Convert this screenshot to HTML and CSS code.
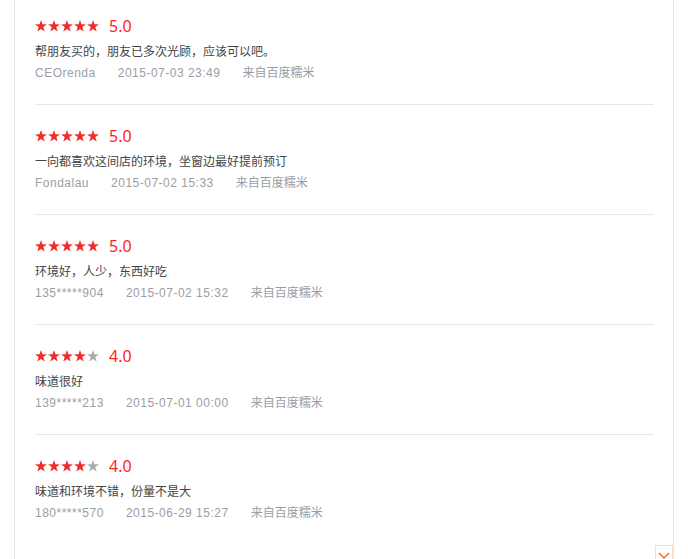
FILE: index.html
```html
<!DOCTYPE html>
<html lang="zh-CN">
<head>
    <meta charset="UTF-8">
    <title>评论</title>
    <link rel="stylesheet" href="styles.css">
</head>
<body>
    <div class="panel">
        <ul class="comments">
            <li class="comment">
                <div class="rating">
                    <span class="stars"><i class="on"></i><i class="on"></i><i class="on"></i><i class="on"></i><i class="on"></i></span>
                    <span class="score">5.0</span>
                </div>
                <p class="text">帮朋友买的，朋友已多次光顾，应该可以吧。</p>
                <p class="meta"><span>CEOrenda</span><span>2015-07-03 23:49</span><span class="src">来自百度糯米</span></p>
            </li>
            <li class="comment">
                <div class="rating">
                    <span class="stars"><i class="on"></i><i class="on"></i><i class="on"></i><i class="on"></i><i class="on"></i></span>
                    <span class="score">5.0</span>
                </div>
                <p class="text">一向都喜欢这间店的环境，坐窗边最好提前预订</p>
                <p class="meta"><span>Fondalau</span><span>2015-07-02 15:33</span><span class="src">来自百度糯米</span></p>
            </li>
            <li class="comment">
                <div class="rating">
                    <span class="stars"><i class="on"></i><i class="on"></i><i class="on"></i><i class="on"></i><i class="on"></i></span>
                    <span class="score">5.0</span>
                </div>
                <p class="text">环境好，人少，东西好吃</p>
                <p class="meta"><span>135*****904</span><span>2015-07-02 15:32</span><span class="src">来自百度糯米</span></p>
            </li>
            <li class="comment">
                <div class="rating">
                    <span class="stars"><i class="on"></i><i class="on"></i><i class="on"></i><i class="on"></i><i></i></span>
                    <span class="score">4.0</span>
                </div>
                <p class="text">味道很好</p>
                <p class="meta"><span>139*****213</span><span>2015-07-01 00:00</span><span class="src">来自百度糯米</span></p>
            </li>
            <li class="comment">
                <div class="rating">
                    <span class="stars"><i class="on"></i><i class="on"></i><i class="on"></i><i class="on"></i><i></i></span>
                    <span class="score">4.0</span>
                </div>
                <p class="text">味道和环境不错，份量不是大</p>
                <p class="meta"><span>180*****570</span><span>2015-06-29 15:27</span><span class="src">来自百度糯米</span></p>
            </li>
        </ul>
        <a class="more" href="#">
            <svg width="12" height="8" viewBox="0 0 12 8"><path d="M1 1 L6 6 L11 1" fill="none" stroke="#ff6600" stroke-width="1.4"/></svg>
        </a>
    </div>
</body>
</html>
```

FILE: styles.css
```css
:root {
    --red: #f22;
    --star: #ee2c2c;
    --grey: #9a9ea6;
    --line: #e6e6e6;
}
body {
    margin: 0;
    background: #fff;
    font-family: "Microsoft YaHei", "Noto Sans", "Noto Sans CJK SC", sans-serif;
    font-size: 12px;
    color: #444;
    overflow: hidden;
}
.panel {
    position: relative;
    width: 658px;
    height: 559px;
    margin-left: 14px;
    border-left: 1px solid var(--line);
    border-right: 1px solid var(--line);
    overflow: hidden;
}
.comments {
    list-style: none;
    margin: -5px 0 0;
    padding: 0 19px 0 20px;
}
.comment {
    padding: 21px 0 21px;
    border-bottom: 1px solid var(--line);
}
.comment:last-child {
    border-bottom: none;
}
.rating {
    display: flex;
    align-items: center;
    height: 20px;
}
.stars {
    display: flex;
    gap: 1px;
}
/* star drawn with clip-path */
.stars i {
    display: block;
    width: 12px;
    height: 12px;
    background: #aaa;
    clip-path: polygon(50% 0%, 62% 36%, 100% 37%, 69% 59%, 81% 96%, 50% 74%, 19% 96%, 31% 59%, 0% 37%, 38% 36%);
}
.stars i.on {
    background: var(--star);
}
.score {
    margin-left: 10px;
    font-size: 16px;
    color: var(--red);
    line-height: 20px;
}
.text {
    margin: 6px 0 0;
    line-height: 20px;
}
.meta {
    margin: 1px 0 0;
    line-height: 20px;
    color: var(--grey);
    font-family: "Liberation Sans", "Noto Sans CJK SC", sans-serif;
    letter-spacing: 0.5px;
}
.meta span {
    margin-right: 22px;
}
.meta .src {
    letter-spacing: 0;
}
.more {
    position: absolute;
    right: 0;
    top: 545px;
    width: 18px;
    height: 18px;
    border: 1px solid #fbdcc4;
    display: flex;
    justify-content: center;
    padding-top: 6px;
    box-sizing: border-box;
    background: #fff;
}
```
